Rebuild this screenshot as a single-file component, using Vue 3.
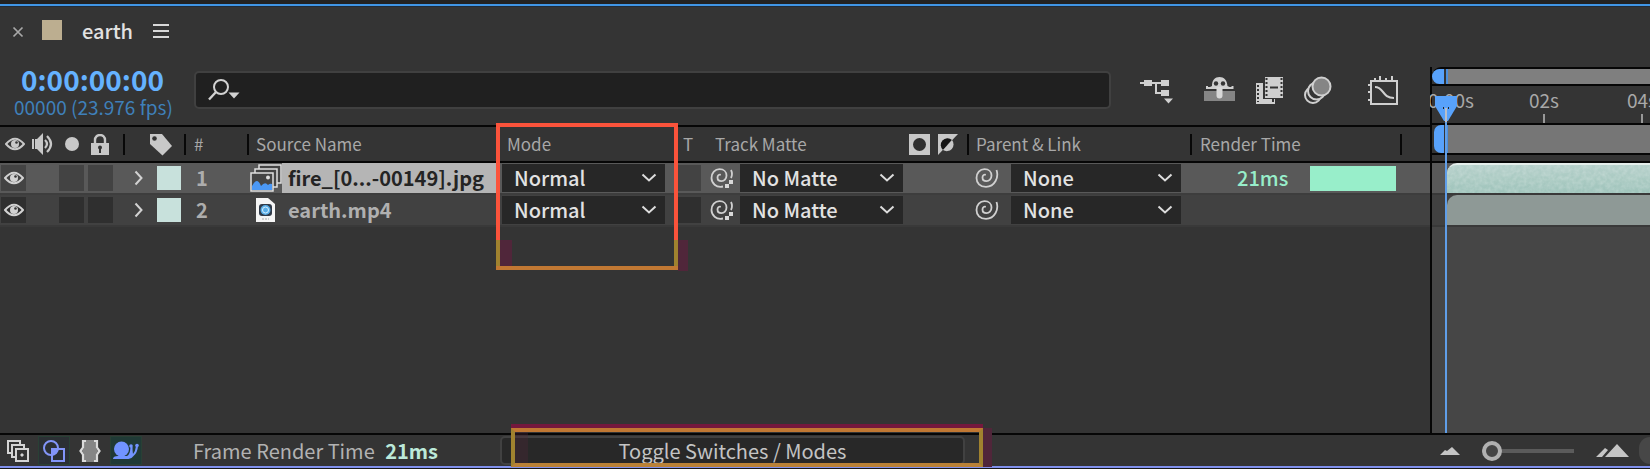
<script setup>
import { ref } from 'vue'

const layers = ref([
  { id: 1, name: 'fire_[0...-00149].jpg', kind: 'sequence', selected: true, mode: 'Normal', matte: 'No Matte', parent: 'None', time: '21ms' },
  { id: 2, name: 'earth.mp4', kind: 'video', selected: false, mode: 'Normal', matte: 'No Matte', parent: 'None', time: '' }
])
const search = ref('')
const zoom = ref(0)
</script>

<template>
  <div class="panel">
    <div class="top-edge"></div>
    <div class="workspace">
      <section class="left">
        <header class="tab">
          <button class="plain close" aria-label="Close tab">
            <svg width="12" height="12" viewBox="0 0 12 12"><path d="M1.500 1.500l9 9M10.500 1.500l-9 9" stroke="#a8a8a8" stroke-width="1.700" /></svg>
          </button>
          <span class="swatch"></span>
          <h1>earth</h1>
          <button class="plain" aria-label="Panel menu">
            <svg width="16" height="16" viewBox="0 0 16 16"><path d="M0 2h16M0 8h16M0 14h16" stroke="#d8d8d8" stroke-width="2" /></svg>
          </button>
        </header>

        <div class="tools">
          <div class="clock">
            <strong>0:00:00:00</strong>
            <span>00000 (23.976 fps)</span>
          </div>
          <label class="search">
            <svg width="34" height="24" viewBox="0 0 34 24" fill="none">
              <circle cx="14" cy="9" r="7" stroke="#d2d2d2" stroke-width="2" />
              <path d="M9 14l-7 7.500" stroke="#d2d2d2" stroke-width="2.400" />
              <path d="M21.500 14.500h11l-5.500 6z" fill="#d2d2d2" />
            </svg>
            <input v-model="search" type="text" aria-label="Search layers" />
          </label>
          <div class="tool-icons">
            <button class="plain flow" aria-label="Mini-flowchart">
              <svg width="34" height="28" viewBox="0 0 34 28" fill="#cfcfcf">
                <path d="M0 6h22v2H0z" /><path d="M4 4h8v6H4zM21 4h8v6h-8zM21 14h8v6h-8z" />
                <path d="M15 7h2v9h5v2h-7zM24 22.500h9l-4.500 5z" />
              </svg>
            </button>
            <button class="plain" aria-label="Hide shy layers">
              <svg width="32" height="28" viewBox="0 0 32 28">
                <path d="M0 15h31v10H0z" fill="#858585" />
                <path d="M2 13v-3h2v1h2l2-1C8 4 11 1 15.500 1S23 4 23.500 10l2 1h2v-1h2v3z" fill="#cfcfcf" />
                <circle cx="12" cy="7.500" r="2.200" fill="#343434" /><circle cx="19" cy="7.500" r="2.200" fill="#343434" />
                <path d="M12.500 11h6v8.500a3 3 0 0 1-6 0z" fill="#d8d8d8" />
              </svg>
            </button>
            <button class="plain" aria-label="Frame blending">
              <svg width="28" height="28" viewBox="0 0 28 28">
                <path d="M0 7h7v16h12v5H0z" fill="#cfcfcf" />
                <path d="M9 1h18v21H9z" fill="#cfcfcf" />
                <path d="M10.500 2v19M25.500 2v19M2 9v17" stroke="#343434" stroke-width="2" stroke-dasharray="2 2" />
                <path d="M14 11.500h8" stroke="#343434" stroke-width="2" />
                <path d="M17 23v3" stroke="#343434" stroke-width="2" />
              </svg>
            </button>
            <button class="plain" aria-label="Motion blur">
              <svg width="28" height="28" viewBox="0 0 28 28" stroke="#cfcfcf" stroke-width="2">
                <circle cx="9" cy="19" r="8" fill="#343434" /><circle cx="12.500" cy="15" r="8.500" fill="#343434" />
                <circle cx="17.500" cy="10.500" r="9" fill="#858585" />
              </svg>
            </button>
            <button class="plain graph" aria-label="Graph editor">
              <svg width="31" height="29" viewBox="0 0 31 29" fill="none" stroke="#cfcfcf" stroke-width="2">
                <path d="M3 5h26v23H3zM7 2v3M12 0v5M18 2v3M24 0v5M0 9h3M0 16h3M0 24h3" />
                <path d="M7 11c9 0 7 11 19 11" stroke-width="2.200" />
              </svg>
            </button>
          </div>
        </div>

        <table class="layers">
          <colgroup>
            <col class="c-sw" /><col class="c-sw" /><col class="c-sw" /><col class="c-lock" /><col class="c-twirl" /><col class="c-label" />
            <col class="c-num" /><col class="c-name" /><col class="c-mode" /><col class="c-t" /><col class="c-matte" />
            <col class="c-parent" /><col class="c-time" /><col />
          </colgroup>
          <thead>
            <tr>
              <th aria-label="Video">
                <svg class="eye" width="20" height="14" viewBox="0 0 20 14"><path d="M1 7Q10-3.500 19 7Q10 17.500 1 7z" fill="none" stroke="#c8c8c8" stroke-width="2" /><circle cx="10" cy="7" r="4" fill="#c8c8c8" /><circle cx="11.500" cy="5.500" r="1.300" fill="#343434" /></svg>
              </th>
              <th aria-label="Audio">
                <svg class="speaker" width="23" height="22" viewBox="0 0 23 22"><path d="M0 6h2v10H0zM3 6h2l6-6v22l-6-6H3z" fill="#c8c8c8" /><path d="M13 7q4 4 0 8M15 3q8 8 0 16" fill="none" stroke="#c8c8c8" stroke-width="2.200" /></svg>
              </th>
              <th aria-label="Solo"><svg class="solo" width="14" height="14" viewBox="0 0 14 14"><circle cx="7" cy="7" r="7" fill="#c8c8c8" /></svg></th>
              <th aria-label="Lock">
                <svg class="lock" width="18" height="21" viewBox="0 0 18 21"><path d="M4 10V6a5 5 0 0 1 10 0v4" fill="none" stroke="#c8c8c8" stroke-width="2.400" /><path d="M0 9h18v12H0z" fill="#c8c8c8" /><circle cx="9" cy="13.500" r="2" fill="#333" /><path d="M8 14h2v5H8z" fill="#333" /></svg>
              </th>
              <th class="sep"></th>
              <th aria-label="Label">
                <svg width="24" height="23" viewBox="0 0 24 23"><path d="M1 1h12l10 12-9.500 9.500L1 11z" fill="#c8c8c8" /><circle cx="5.500" cy="5.500" r="2.300" fill="#333" /></svg>
              </th>
              <th class="sep num-head">#</th>
              <th class="sep name-head">Source Name</th>
              <th class="mode-head">Mode</th>
              <th class="t-head">T</th>
              <th class="matte-head">
                <div class="matte-title"><span>Track Matte</span>
                  <svg width="49" height="21" viewBox="0 0 49 21"><path d="M0 0h21v21H0z" fill="#c8c8c8" /><circle cx="10.500" cy="10.500" r="6.500" fill="#303030" /><path d="M29 0h20L29 21z" fill="#c8c8c8" /><path d="M34 16A6.500 6.500 0 0 1 43 6z" fill="#151515" /><path d="M34 16L43 6a6.800 6.800 0 0 1-9 10z" fill="#c8c8c8" /></svg>
                </div>
              </th>
              <th class="sep parent-head">Parent &amp; Link</th>
              <th class="sep time-head">Render Time</th>
              <th class="sep"></th>
            </tr>
          </thead>
          <tbody>
            <tr v-for="layer in layers" :key="layer.id" :class="{ selected: layer.selected }">
              <td>
                <button class="cell" :aria-label="'Toggle visibility of ' + layer.name">
                  <svg width="20" height="14" viewBox="0 0 20 14"><path d="M1 7Q10-3.500 19 7Q10 17.500 1 7z" fill="none" stroke="#d2d2d2" stroke-width="2" /><circle cx="10" cy="7" r="4" fill="#d2d2d2" /><circle cx="11.500" cy="5.500" r="1.300" fill="#343434" /></svg>
                </button>
              </td>
              <td></td>
              <td><button class="cell" :aria-label="'Solo ' + layer.name"></button></td>
              <td><button class="cell" :aria-label="'Lock ' + layer.name"></button></td>
              <td class="twirl">
                <button class="plain" :aria-label="'Expand ' + layer.name"><svg width="9" height="16" viewBox="0 0 9 16"><path d="M1.500 1.500l6 6.500-6 6.500" fill="none" stroke="#d2d2d2" stroke-width="2" /></svg></button>
              </td>
              <td class="label"><span></span></td>
              <td class="number">{{ layer.id }}</td>
              <td class="name">
                <div class="name-line">
                  <svg v-if="layer.kind === 'sequence'" width="32" height="28" viewBox="0 0 32 28" stroke="#e0e0e0" stroke-width="1.500">
                    <path d="M9 1h22v18H9z" fill="#444" /><path d="M5 5h22v18H5z" fill="#444" /><path d="M1 9h22v18H1z" fill="#454545" />
                    <path d="M2 22q5-10 9 0 4-5 7-1 2-2 4-1v6H2z" fill="#4b98f5" stroke="none" /><circle cx="18" cy="13.500" r="2" fill="#e0e0e0" stroke="none" />
                  </svg>
                  <svg v-else width="32" height="24" viewBox="0 0 32 24">
                    <path d="M6 0h12l7 6v18H6z" fill="#f5f5f5" /><rect x="9" y="6" width="13" height="12" rx="3" fill="#303a48" /><circle cx="15.500" cy="12" r="5" fill="#5aaee8" /><circle cx="15.500" cy="12" r="3" fill="none" stroke="#d7f0ff" /><path d="M12 21h7" stroke="#aaa" stroke-dasharray="2 1" />
                  </svg>
                  <span class="filename">{{ layer.name }}</span>
                </div>
              </td>
              <td>
                <div class="drop mode">
                  <select v-model="layer.mode" :aria-label="'Mode of ' + layer.name"><option>Normal</option></select>
                  <svg width="16" height="10" viewBox="0 0 16 10"><path d="M1.500 1.500l6.500 6 6.500-6" fill="none" stroke="#ddd" stroke-width="2" /></svg>
                </div>
              </td>
              <td><button class="cell t" :aria-label="'Preserve transparency of ' + layer.name"></button></td>
              <td>
                <div class="link-line matte">
                  <button class="plain" :aria-label="'Pick matte for ' + layer.name">
                    <svg width="24" height="20" viewBox="0 0 24 20"><path d="M13 18.500C6 20 1.500 15 1.500 10 1.500 5 5 1.200 9.500 1.200 14 1.200 16.500 4 16.500 7.500 16.500 11 14 13.200 11.500 13.200 9 13.200 7.500 11.500 7.500 9.500 7.500 7.500 9 6.200 10.800 6.800M21 2q2 4 0 8" fill="none" stroke="#d0d0d0" stroke-width="1.800" /><path d="M19 12h4v4h-4zM15 16h4v4h-4z" fill="#d8d8d8" /></svg>
                  </button>
                  <div class="drop">
                    <select v-model="layer.matte" :aria-label="'Track matte of ' + layer.name"><option>No Matte</option></select>
                    <svg width="16" height="10" viewBox="0 0 16 10"><path d="M1.500 1.500l6.500 6 6.500-6" fill="none" stroke="#ddd" stroke-width="2" /></svg>
                  </div>
                </div>
              </td>
              <td>
                <div class="link-line parent">
                  <button class="plain" :aria-label="'Pick parent for ' + layer.name">
                    <svg width="24" height="20" viewBox="0 0 24 20"><path d="M21.500 2C24 9 20 18.800 11 18.800 5 18.800 1.500 15 1.500 10 1.500 5 5 1.200 9.500 1.200 14 1.200 16.500 4 16.500 7.500 16.500 11 14 13.200 11.500 13.200 9 13.200 7.500 11.500 7.500 9.500 7.500 7.500 9 6.200 10.800 6.800" fill="none" stroke="#d0d0d0" stroke-width="1.800" /></svg>
                  </button>
                  <div class="drop">
                    <select v-model="layer.parent" :aria-label="'Parent of ' + layer.name"><option>None</option></select>
                    <svg width="16" height="10" viewBox="0 0 16 10"><path d="M1.500 1.500l6.500 6 6.500-6" fill="none" stroke="#ddd" stroke-width="2" /></svg>
                  </div>
                </div>
              </td>
              <td><div v-if="layer.time" class="render"><span>{{ layer.time }}</span><i></i></div></td>
              <td></td>
            </tr>
          </tbody>
        </table>
      </section>

      <section class="timeline" aria-label="Timeline">
        <div class="navigator"><i></i><b></b></div>
        <div class="ruler"><span>0:00s</span><span>02s</span><span>04s</span></div>
        <div class="work-area"><i></i><b></b></div>
        <div class="track first">
          <div class="clip"><svg width="100%" height="100%"><filter id="grain"><feTurbulence type="fractalNoise" baseFrequency="0.25" numOctaves="2" /><feColorMatrix type="matrix" values="0 0 0 0 1  0 0 0 0 1  0 0 0 0 1  1.200 0 0 0 -0.350" /></filter><rect width="100%" height="100%" filter="url(#grain)" /></svg></div>
        </div>
        <div class="track"><div class="clip"></div></div>
        <div class="playhead">
          <svg width="22" height="26" viewBox="0 0 22 26"><path d="M0 0h22v10L13 25H9L0 10z" fill="#58a2fb" /><path d="M11 12v14" stroke="#b9bec8" stroke-width="2" /><path d="M8 12h1M13 12h1" stroke="#222" stroke-width="2" /></svg>
        </div>
      </section>
    </div>

    <footer class="bottom">
      <div class="bottom-left">
        <button class="foot-icon" aria-label="Layer switches pane">
          <svg width="22" height="22" viewBox="0 0 22 22" fill="#343434" stroke="#d5d5d5" stroke-width="2"><path d="M1 1h12v12H1z" /><path d="M5 5h12v12H5z" /><path d="M9 9h12v12H9z" /><path d="M14 14h2v2h-2z" fill="#d5d5d5" stroke-width="1" /></svg>
        </button>
        <button class="foot-icon on" aria-label="Transfer controls pane">
          <svg width="22" height="22" viewBox="0 0 22 22" fill="none" stroke="#8295f8" stroke-width="2"><path d="M9 9h6.500a7 7 0 0 1-6.500 6z" fill="#8295f8" stroke="none" /><circle cx="8" cy="8" r="7" /><path d="M9 9h12v12H9z" /></svg>
        </button>
        <button class="foot-icon" aria-label="In and out pane">
          <svg width="22" height="22" viewBox="0 0 22 22"><path d="M5 0h12v8l2 3-2 3v8H5v-8l-2-3 2-3z" fill="#858585" /><path d="M7 1H4v6.500L1.500 11 4 14.500V21h3M15 1h3v6.500l2.500 3.500-2.500 3.500V21h-3" fill="none" stroke="#dadada" stroke-width="2.200" /></svg>
        </button>
        <button class="foot-icon on snail" aria-label="Render time pane">
          <svg width="26" height="20" viewBox="0 0 26 20" fill="#7194ff"><circle cx="8.500" cy="8" r="7.500" /><path d="M0 18q0-3 5-3h9q3-1 3.500-9h2q0 5 .5 7 2.500-3 3-8h2q-.5 7-4.500 10-2 3-5 3z" /><circle cx="18" cy="5" r="1.800" /><circle cx="24" cy="4.500" r="1.800" /></svg>
        </button>
        <p>Frame Render Time <strong>21ms</strong></p>
      </div>
      <button class="toggle">Toggle Switches / Modes</button>
      <div class="zoom">
        <svg width="20" height="8" viewBox="0 0 20 8"><path d="M0 8l5-5 2 1 5-4 8 8z" fill="#c5c5c5" /></svg>
        <input v-model="zoom" type="range" min="0" max="100" aria-label="Timeline zoom" />
        <svg width="33" height="14" viewBox="0 0 33 14"><path d="M0 13l9-9 3 2-6 7zM9 13L21 0l12 13z" fill="#c5c5c5" /></svg>
        <span class="knob"></span>
      </div>
    </footer>
    <div class="mark mark-mode"><i></i><b></b></div>
    <div class="mark mark-toggle"></div>
  </div>
</template>

<style>
body { background: #343434; }
</style>

<style scoped>
* { box-sizing: border-box; }
.panel {
  position: relative; display: flex; flex-direction: column; min-height: 100vh; overflow: hidden;
  background: #343434; color: #a8a8a8; border-bottom: 1px solid #181818;
  font: 20px/28px "Noto Sans CJK SC", "Noto Sans", sans-serif;
}
svg { display: block; flex: none; }
button, input, select { font: inherit; color: inherit; margin: 0; }
.plain { display: flex; padding: 0; border: 0; background: none; }
.top-edge { height: 7px; background: #222; border-bottom: 1px solid #202c38; box-shadow: inset 0 -2px #4095e5; }
.workspace { flex: 1; display: grid; grid-template-columns: minmax(0, 1fr) 220px; }
.left { min-width: 0; }
.tab { display: flex; align-items: center; height: 50px; padding: 0 12px 2px; }
.swatch { width: 20px; height: 20px; margin: 0 20px 2px 18px; background: #bcae90; }
.close { margin-top: 2px; }
.tab h1 { margin: 0 20px 0 0; font-size: 20px; font-weight: 500; color: #e2e2e2; }
.tools { display: flex; align-items: center; height: 68px; padding: 2px 31px 4px 0; }
.clock { width: 194px; padding: 3px 0 0 14px; white-space: nowrap; display: flex; flex-direction: column; }
.clock strong { padding-left: 7px; font-size: 28px; line-height: 30px; color: #65b2ff; }
.clock span { font-size: 19px; line-height: 26px; color: #3f80ba; }
.search { flex: 1; display: flex; align-items: center; height: 38px; padding-left: 11px; background: #202020; border: 2px solid #404040; border-radius: 5px; }
.search input { flex: 1; min-width: 0; border: 0; outline: 0; background: transparent; padding: 0 8px; }
.tool-icons { display: flex; align-items: center; gap: 20px; padding-left: 29px; }
.flow { margin-right: 10px; }
.graph { margin-left: 16px; }

.layers { width: 100%; table-layout: fixed; border-collapse: separate; border-spacing: 0; white-space: nowrap; }
.c-sw { width: 29px; }
.c-lock { width: 35px; }
.c-twirl { width: 27px; }
.c-label { width: 34px; }
.c-num { width: 63px; }
.c-name { width: 251px; }
.c-mode { width: 181px; }
.c-t { width: 29px; }
.c-matte { width: 259px; }
.c-parent { width: 223px; }
.c-time { width: 210px; }
th { height: 38px; padding: 0; border-top: 2px solid #060606; border-bottom: 2px solid #060606; font-size: 17px; font-weight: 400; text-align: left; line-height: 30px; }
th.sep { background: linear-gradient(#080808, #080808) 1px center / 2px 21px no-repeat; }
.eye { margin-left: 5px; }
.speaker { margin-left: 3px; }
.solo { margin-left: 7px; }
.lock { margin-left: 4px; }
.num-head { padding-left: 11px; }
.name-head { padding-left: 10px; }
.mode-head { padding-left: 10px; }
.t-head { padding-left: 5px; }
.matte-head { padding-left: 8px; }
.parent-head { padding-left: 10px; }
.time-head { padding-left: 11px; }
.matte-title { display: flex; align-items: center; justify-content: space-between; padding-right: 8px; }

td { height: 32px; padding: 0; background: #414141; border-bottom: 2px solid #393939; }
.selected td { background: #595959; border-bottom-color: #3d3d3d; }
.cell { display: flex; justify-content: center; align-items: center; width: 25px; height: 26px; margin-left: 1px; padding: 0; border: 0; background: #2f2f2f; }
.selected .cell { background: #434343; }
.cell.t { margin-left: 0; width: 23px; }
.twirl { padding-left: 12px; }
.label { padding-left: 8px; }
.label span { display: block; width: 24px; height: 24px; background: #c8e1dc; }
.number { padding-left: 13px; font-weight: 700; color: #adadad; line-height: 28px; }
.name-line { display: flex; align-items: center; padding-left: 4px; }
.filename { flex: 1; height: 30px; padding-left: 6px; font-weight: 700; color: #b0b0b0; line-height: 30px; }
.selected .filename { background: #b5b5b5; color: #242424; }
.drop { position: relative; flex: none; width: 163px; height: 28px; background: #272727; }
.drop.mode { margin-left: 5px; }
.drop select { display: block; width: 100%; height: 28px; padding: 0 30px 0 12px; border: 0; border-radius: 0; background: transparent; color: #e2e2e2; line-height: 28px; appearance: none; font-weight: 500; }
.drop svg { position: absolute; right: 8px; top: 9px; pointer-events: none; }
.link-line { display: flex; align-items: center; }
.matte { gap: 6px; padding-left: 3px; }
.parent { gap: 12px; padding-left: 9px; }
.parent .drop { width: 170px; }
.render { display: flex; align-items: center; gap: 22px; padding-left: 48px; color: #98eeca; font-weight: 500; }
.render i { width: 86px; height: 25px; background: #98eeca; }

.timeline {
  position: relative; overflow: hidden; padding-left: 2px;
  background:
    linear-gradient(#060606, #060606) left 60px / 2px 100% no-repeat,
    linear-gradient(#343434 157px, #464646 157px);
}
.navigator, .work-area { display: flex; }
.navigator { margin-top: 60px; height: 19px; border: solid #060606; border-width: 2px 0; border-radius: 9px 0 0 0; }
.navigator i, .work-area i { width: 12px; background: #58a2fb; border-radius: 10px 0 0 10px; }
.navigator b, .work-area b { flex: 1; margin-left: 2px; background: #7f7f7f; border-left: 2px solid #4b8edb; }
.ruler { display: flex; height: 37px; font-size: 19px; line-height: 28px; }
.ruler span { flex: none; width: 98px; text-align: center; background: linear-gradient(#999, #999) center bottom / 2px 9px no-repeat; }
.ruler span:first-child { margin: 0 -5px 0 -30px; background: none; }
.work-area { height: 32px; border: solid #060606; border-width: 2px 0; }
.work-area i { margin-left: 2px; width: 10px; border-radius: 7px 0 0 7px; }
.work-area b { background: #767676; }
.track { height: 32px; padding-left: 15px; background: #414141; border-bottom: 2px solid #393939; }
.track.first { margin-top: 6px; height: 34px; background: #595959; border-top: 2px solid #060606; }
.clip { height: 30px; overflow: hidden; background: #8e9996; border-radius: 10px 0 0 0; }
.first .clip { background: linear-gradient(#b5d0ca, #9fc4bb); border-top: 2px solid #e4eeeb; }
.clip svg { opacity: .3; }
.playhead { position: absolute; top: 89px; bottom: 0; left: 5px; width: 22px; background: linear-gradient(#609ee8, #609ee8) center / 2px 100% no-repeat; }

.bottom { display: flex; align-items: center; height: 35px; border-top: 2px solid #060606; border-bottom: 2px solid #8090ec; }
.bottom-left { flex: none; display: flex; align-items: center; gap: 4px; width: 500px; padding-left: 2px; }
.foot-icon { display: flex; align-items: center; justify-content: center; width: 32px; height: 29px; padding: 0; border: 1px solid transparent; background: none; }
.foot-icon.on { background: #2b3034; border-color: #294035; }
.foot-icon.snail { background: #203a36; }
.bottom p { margin: 0 0 0 47px; white-space: nowrap; color: #b2b2b2; }
.bottom strong { margin-left: 6px; color: #bce9d9; }
.toggle { flex: 0 1 465px; height: 29px; padding: 0; border: 2px solid #414141; border-radius: 5px; background: #282828; color: #c4c4c4; line-height: 24px; }
.zoom { display: flex; align-items: center; margin-left: auto; }
.zoom input { width: 92px; height: 20px; margin: 0 22px; appearance: none; background: linear-gradient(#5b5b5b, #5b5b5b) center / 100% 4px no-repeat; }
.zoom input::-webkit-slider-thumb { appearance: none; width: 20px; height: 20px; border: 4px solid #b0b0b0; border-radius: 50%; background: #444; }
.knob { width: 11px; height: 27px; margin-left: 10px; background: #474747; border-radius: 14px 0 0 14px; }

.mark { position: absolute; pointer-events: none; }
.mark-mode { left: 496px; top: 123px; width: 182px; height: 147px; border: 4px solid; border-image: linear-gradient(#fb533b 117px, #a0822f 117px, #a0822f 143px, #c17833 143px) 4; }
.mark-mode i, .mark-mode b { position: absolute; bottom: 0; width: 12px; height: 26px; background: #50263a; }
.mark-mode b { right: -14px; width: 10px; bottom: -5px; height: 31px; }
.mark-toggle { left: 511px; bottom: 1px; width: 472px; height: 39px; border: 4px solid #a0822f; border-top-color: #c17833; border-bottom-color: #b98137; box-shadow: 0 -4px #74183d, 9px 0 #50263a, inset 13px 0 #50263a55; }
</style>
